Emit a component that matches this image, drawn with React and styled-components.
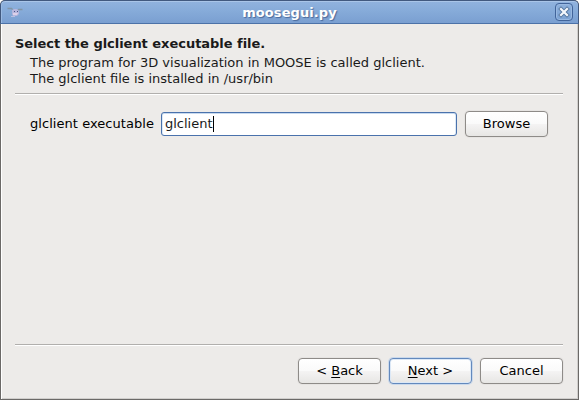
import React from 'react';
import styled, { createGlobalStyle } from 'styled-components';

const GlobalStyle = createGlobalStyle`
  *, *::before, *::after { box-sizing: border-box; }
  html, body { margin: 0; background: #fff; overflow: hidden; }
  body, button, input { font: 13px/16px "DejaVu Sans", sans-serif; color: #1a1a1a; }
`;

const Window = styled.main`
  display: flex;
  flex-direction: column;
  width: 579px;
  height: 400px;
  overflow: hidden;
  border-radius: 5px 5px 0 0;
  background: #6b6967;
`;

const TitleBar = styled.header`
  flex: none;
  display: grid;
  grid-template-columns: 28px 1fr 28px;
  align-items: center;
  height: 24px;
  border: 1px solid #41597f;
  border-bottom-color: #4c72a8;
  border-radius: 5px 5px 0 0;
  background: linear-gradient(#91b3de, #86abd9 45%, #7a9fd1);
  box-shadow: inset 0 1px #a9c5e8, inset 1px 0 #9bbae2;
`;

const WindowIcon = styled.svg`
  display: block;
  width: 18px;
  height: 14px;
  margin-left: 5px;
`;

const WindowTitle = styled.h1`
  margin: 0;
  padding: 1px 0 0;
  color: #fff;
  font-size: 13px;
  line-height: 16px;
  letter-spacing: 0.08px;
  text-align: center;
  text-shadow: 1px 1px 1px #49699b;
`;

const CloseButton = styled.button`
  display: grid;
  place-items: center;
  width: 18px;
  height: 18px;
  margin-left: 5px;
  padding: 0;
  border: 1px solid #41649a;
  border-radius: 4px;
  background: linear-gradient(#8db0dc, #7ca2d3);
  box-shadow: inset 0 0 0 1px #99b9e1;
`;

const Content = styled.section`
  flex: 1;
  display: flex;
  flex-direction: column;
  margin: 0 1px 1px;
  padding: 12px 15px 15px 13px;
  border: solid #fff;
  border-width: 0 0 0 1px;
  background: #edebe9;
  box-shadow: inset -1px -1px #d0cecc;
`;

const Heading = styled.h2`
  margin: 0;
  font-size: 13px;
  line-height: 16px;
  letter-spacing: -0.03px;
`;

const Description = styled.p`
  margin: 3px 0 6px 15px;
  line-height: 16px;
  white-space: nowrap;
`;

const Separator = styled.hr`
  flex: none;
  width: 100%;
  height: 2px;
  margin: 0;
  border: 0;
  border-top: 1px solid #b1afad;
  background: #fff;
`;

const Field = styled.div`
  display: flex;
  align-items: center;
  margin: 16px 14px 0 15px;
`;

const Label = styled.label`
  width: 131px;
  color: #000;
  letter-spacing: 0.05px;
  white-space: nowrap;
`;

const InputBox = styled.div`
  display: flex;
  align-items: center;
  width: 296px;
  height: 24px;
  margin-right: 8px;
  padding: 0 3px;
  border: 1px solid #4a72ac;
  border-radius: 3px;
  background: #fff;
  box-shadow: inset 0 1px #c8daef, inset 1px 0 #dce8f5, inset -1px 0 #dce8f5;
`;

const Caret = styled.span`
  width: 1px;
  height: 16px;
  background: #000;
`;

const Button = styled.button`
  width: 83px;
  height: 26px;
  padding: 0 0 1px;
  border: 1px solid ${({ $focused }) => ($focused ? '#6389bd' : '#8e8b88')};
  border-radius: 4px;
  background: linear-gradient(#fff, #fafafa 48%, #f4f3f3 52%, #e7e6e4);
  box-shadow: ${({ $focused }) => ($focused
    ? '0 0 0 1px #cbd9eb, inset 0 0 0 1px #dce8f6'
    : '0 0 0 1px #e6e4e2, inset 0 1px #fff')};
  color: #000;
`;

const Mnemonic = styled.span`
  text-decoration: underline;
  text-decoration-thickness: 1px;
  text-underline-offset: 2px;
  text-decoration-skip-ink: none;
`;

const Footer = styled.footer`
  display: flex;
  justify-content: flex-end;
  gap: 8px;
  margin-top: 12px;
`;

const Spacer = styled.div`
  flex: 1;
`;

export default function App() {
  return (
    <>
      <GlobalStyle />
      <Window>
        <TitleBar>
          <WindowIcon viewBox="0 0 18 14" aria-hidden="true">
            <path d="M1.5 3.5h4l2 2M16.5 4.5h-4l-1.5 2" fill="none" stroke="#8295a5" strokeWidth="1.3" />
            <path d="M6 5 8 4h3l2 2v3l-2 2H7L6 9Z" fill="#b5b6dd" />
            <path d="M7 8h5l-1 2H7Z" fill="#ddd1e9" />
            <path d="M8 6h1v1H8Zm3 0h1v1h-1Z" fill="#4d5485" />
            <path d="M5 11.5h4" stroke="#b7bfe2" />
          </WindowIcon>
          <WindowTitle>moosegui.py</WindowTitle>
          <CloseButton aria-label="Close">
            <svg width="12" height="12" viewBox="0 0 12 12">
              <path d="m3 3 6 6m0-6-6 6" stroke="#55779f" strokeWidth="4" strokeLinecap="square" />
              <path d="m3 3 6 6m0-6-6 6" stroke="#f5f8fc" strokeWidth="2.2" strokeLinecap="square" />
            </svg>
          </CloseButton>
        </TitleBar>
        <Content>
          <Heading>Select the glclient executable file.</Heading>
          <Description>
            The program for 3D visualization in MOOSE is called glclient.<br />
            The glclient file is installed in /usr/bin
          </Description>
          <Separator />
          <Field>
            <Label>glclient executable</Label>
            <InputBox>glclient<Caret /></InputBox>
            <Button>Browse</Button>
          </Field>
          <Spacer />
          <Separator />
          <Footer>
            <Button>&lt; <Mnemonic>B</Mnemonic>ack</Button>
            <Button $focused>
              <Mnemonic>N</Mnemonic>ext &gt;
            </Button>
            <Button>Cancel</Button>
          </Footer>
        </Content>
      </Window>
    </>
  );
}
